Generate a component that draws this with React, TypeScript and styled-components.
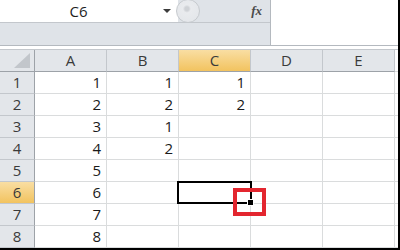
import React from "react";
import styled, { createGlobalStyle, css } from "styled-components";

const GlobalStyle = createGlobalStyle`
  html, body {
    margin: 0;
    padding: 0;
    background: #ffffff;
  }
  body {
    font-family: "Open Sans", "Noto Sans", sans-serif;
  }
`;

const Window = styled.div`
  width: 400px;
  height: 250px;
  box-sizing: border-box;
  border-right: 2px solid #000;
  border-bottom: 2px solid #000;
  background: #fff;
  overflow: hidden;
  display: flex;
  flex-direction: column;
`;

const TopBar = styled.div`
  display: flex;
  height: 46px;
  box-sizing: border-box;
  border-bottom: 1px solid #b4b9bf;
  flex-shrink: 0;
`;

const ToolArea = styled.div`
  width: 271px;
  box-sizing: border-box;
  border-right: 1px solid #b4b9bf;
  background: #dfe3e8;
  display: flex;
  flex-direction: column;
`;

const NameRow = styled.div`
  height: 23px;
  box-sizing: border-box;
  border-bottom: 1px solid #c3c7cc;
  display: flex;
  align-items: stretch;
`;

const NameBox = styled.div`
  width: 178px;
  background: #fff;
  display: flex;
  align-items: center;
  font-size: 15px;
  color: #1e1e1e;
`;

const NameText = styled.span`
  flex: 1;
  text-align: center;
  padding-right: 6px;
  line-height: 22px;
`;

const DropArrow = styled.span`
  width: 0;
  height: 0;
  border-left: 4px solid transparent;
  border-right: 4px solid transparent;
  border-top: 4px solid #3c3c3c;
  margin-right: 7px;
`;

const Knob = styled.div`
  width: 24px;
  height: 24px;
  margin-left: -2px;
  margin-top: -1px;
  box-sizing: border-box;
  border-radius: 50%;
  border: 1px solid #c6cace;
  background: radial-gradient(circle at 45% 40%, #cfd2d6 0 2px, #e9ebee 4px, #e2e5e9 100%);
  z-index: 1;
`;

const FxSlot = styled.div`
  flex: 1;
  display: flex;
  align-items: center;
  justify-content: flex-end;
  padding-right: 8px;
  font-family: "Liberation Serif", "DejaVu Serif", serif;
  font-style: italic;
  font-weight: bold;
  font-size: 13px;
  color: #4a4a4a;
`;

const FormulaInput = styled.div`
  flex: 1;
  background: #fff;
`;

const Spacer = styled.div`
  height: 3px;
  flex-shrink: 0;
`;

const Sheet = styled.div`
  display: grid;
  grid-template-columns: 35px repeat(5, 72px) 1fr;
  grid-auto-rows: 22px;
  border-top: 1px solid #c3c7cc;
  font-size: 15px;
`;

const headerBase = css<{ $active?: boolean }>`
  box-sizing: border-box;
  background: ${(p) =>
    p.$active ? "linear-gradient(#f9dea3, #f2c35f)" : "#e3e6ea"};
  color: #3a3a3a;
  display: flex;
  align-items: center;
  justify-content: center;
  line-height: 1;
`;

const Corner = styled.div`
  ${headerBase};
  border-right: 1px solid #9da2a8;
  border-bottom: 1px solid #9da2a8;
  position: relative;
`;

const CornerTriangle = styled.div`
  position: absolute;
  right: 4px;
  bottom: 3px;
  width: 0;
  height: 0;
  border-left: 16px solid transparent;
  border-bottom: 15px solid #c2c6cb;
`;

const ColHead = styled.div<{ $active?: boolean }>`
  ${headerBase};
  border-right: 1px solid #c3c7cc;
  border-bottom: 1px solid #9da2a8;
`;

const RowHead = styled.div<{ $active?: boolean }>`
  ${headerBase};
  border-right: 1px solid #9da2a8;
  border-bottom: 1px solid #c3c7cc;
`;

const Cell = styled.div`
  box-sizing: border-box;
  border-right: 1px solid #dadcdd;
  border-bottom: 1px solid #dadcdd;
  display: flex;
  align-items: center;
  justify-content: flex-end;
  padding-right: 5px;
  color: #1a1a1a;
  line-height: 1;
  position: relative;
`;

const Selection = styled.div`
  position: absolute;
  left: -2px;
  top: -1px;
  right: -2px;
  bottom: -1px;
  border: 2px solid #000;
  pointer-events: none;
  z-index: 2;
`;

const FillHandle = styled.div`
  position: absolute;
  right: -4px;
  bottom: -4px;
  width: 5px;
  height: 5px;
  background: #000;
  border: 1px solid #fff;
`;

const Callout = styled.div`
  position: absolute;
  left: 54px;
  top: 6px;
  width: 33px;
  height: 28px;
  box-sizing: border-box;
  border: 4px solid #e3262f;
  z-index: 3;
  pointer-events: none;
`;

const columns = ["A", "B", "C", "D", "E"];
const data: Record<string, (number | null)[]> = {
  A: [1, 2, 3, 4, 5, 6, 7, 8],
  B: [1, 2, 1, 2, null, null, null, null],
  C: [1, 2, null, null, null, null, null, null],
  D: [],
  E: [],
};

export default function App() {
  return (
    <>
      <GlobalStyle />
      <Window>
        <TopBar>
          <ToolArea>
            <NameRow>
              <NameBox>
                <NameText>C6</NameText>
                <DropArrow />
              </NameBox>
              <Knob />
              <FxSlot>fx</FxSlot>
            </NameRow>
          </ToolArea>
          <FormulaInput />
        </TopBar>
        <Spacer />
        <Sheet>
          <Corner>
            <CornerTriangle />
          </Corner>
          {columns.map((c) => (
            <ColHead key={c} $active={c === "C"}>
              {c}
            </ColHead>
          ))}
          <Cell />
          {Array.from({ length: 8 }, (_, r) => (
            <React.Fragment key={r}>
              <RowHead $active={r === 5}>{r + 1}</RowHead>
              {columns.map((c) => {
                const v = data[c][r];
                const selected = c === "C" && r === 5;
                return (
                  <Cell key={c}>
                    {v ?? ""}
                    {selected && (
                      <>
                        <Selection>
                          <FillHandle />
                        </Selection>
                        <Callout />
                      </>
                    )}
                  </Cell>
                );
              })}
              <Cell />
            </React.Fragment>
          ))}
        </Sheet>
      </Window>
    </>
  );
}
